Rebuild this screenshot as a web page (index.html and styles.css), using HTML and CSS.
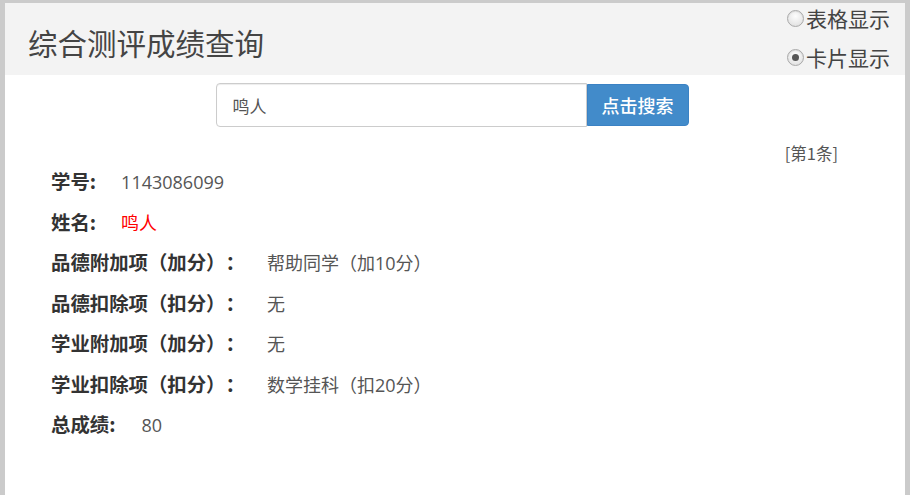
FILE: index.html
```html
<!DOCTYPE html>
<html lang="zh-CN">
<head>
<meta charset="utf-8">
<title>综合测评成绩查询</title>
<link rel="stylesheet" href="styles.css">
</head>
<body>
<div class="frame">
  <header class="header">
    <h1 class="title">综合测评成绩查询</h1>
    <div class="views">
      <label class="view"><input type="radio" name="view" class="radio">表格显示</label>
      <label class="view"><input type="radio" name="view" class="radio" checked>卡片显示</label>
    </div>
  </header>
  <div class="search">
    <input class="search-input" type="text" value="鸣人">
    <button class="search-btn" type="button">点击搜索</button>
  </div>
  <div class="counter">[第1条]</div>
  <div class="card">
    <div class="row"><span class="label">学号:</span><span class="value v-short">1143086099</span></div>
    <div class="row"><span class="label">姓名:</span><span class="value v-short name">鸣人</span></div>
    <div class="row"><span class="label">品德附加项（加分）：</span><span class="value v-long">帮助同学（加10分）</span></div>
    <div class="row"><span class="label">品德扣除项（扣分）：</span><span class="value v-long">无</span></div>
    <div class="row"><span class="label">学业附加项（加分）：</span><span class="value v-long">无</span></div>
    <div class="row"><span class="label">学业扣除项（扣分）：</span><span class="value v-long">数学挂科（扣20分）</span></div>
    <div class="row"><span class="label">总成绩:</span><span class="value v-total">80</span></div>
  </div>
</div>
</body>
</html>
```
FILE: styles.css
```css
* { box-sizing: border-box; }
html, body { margin: 0; padding: 0; background: #fff; }
body {
  font-family: "Open Sans", "Noto Sans CJK SC", sans-serif;
  color: #555;
  text-spacing-trim: space-all;
}
.frame {
  width: 910px;
  height: 495px;
  border-top: 3px solid #cbcbcb;
  border-left: 5px solid #cbcbcb;
  border-right: 5px solid #cbcbcb;
  background: #fff;
  overflow: hidden;
}
.header {
  height: 72px;
  background: #f3f3f3;
  display: flex;
  justify-content: space-between;
}
.title {
  margin: 0;
  padding: 22px 0 0 23px;
  font-family: "Noto Sans CJK SC", sans-serif;
  font-weight: normal;
  font-size: 29.5px;
  line-height: 34px;
  color: #444;
}
.views {
  display: flex;
  flex-direction: column;
  gap: 9px;
  padding: 0 15px 0 0;
}
.view {
  display: flex;
  align-items: center;
  height: 30px;
  font-family: "Noto Sans CJK SC", sans-serif;
  font-size: 21px;
  color: #444;
}
.radio {
  appearance: none;
  -webkit-appearance: none;
  width: 17px;
  height: 17px;
  margin: 0 2px 0 0;
  border: 1px solid #a9a9a9;
  border-radius: 50%;
  background: radial-gradient(circle at 50% 35%, #fdfdfd 0%, #e6e6e6 70%, #d5d5d5 100%);
  box-shadow: inset 0 1px 1px rgba(0,0,0,0.08);
  position: relative;
}
.radio:checked::after {
  content: "";
  position: absolute;
  left: 4px;
  top: 4px;
  width: 7px;
  height: 7px;
  border-radius: 50%;
  background: #555;
}
.search {
  display: flex;
  justify-content: center;
  align-items: center;
  margin-top: 8px;
  padding-right: 6px;
}
.search-input {
  width: 371px;
  height: 44px;
  margin: 0;
  padding: 0 16px;
  border: 1px solid #cccccc;
  border-radius: 4px 0 0 4px;
  box-shadow: inset 0 1px 1px rgba(0,0,0,0.075);
  font-family: "Noto Sans CJK SC", sans-serif;
  font-size: 17px;
  color: #555;
  outline: none;
}
.search-btn {
  width: 102px;
  height: 42px;
  margin: 0;
  padding: 0;
  border: 1px solid #3b82c4;
  border-radius: 0 4px 4px 0;
  background: #428bca;
  color: #fff;
  font-family: "Noto Sans CJK SC", sans-serif;
  font-size: 18px;
  font-weight: 500;
}
.counter {
  margin-top: 18px;
  padding-right: 67px;
  text-align: right;
  font-family: "Noto Sans CJK SC", sans-serif;
  font-size: 16.5px;
  line-height: 16px;
  color: #555;
}
.card {
  padding-left: 46px;
}
.row {
  display: flex;
  align-items: baseline;
  height: 40.5px;
  line-height: 40.5px;
}
.label {
  font-family: "Noto Sans CJK SC", sans-serif;
  font-weight: bold;
  font-size: 19.4px;
  color: #333;
}
.value {
  font-size: 18px;
  color: #555;
}
.v-short { margin-left: 25px; }
.v-total { margin-left: 26px; }
.v-long { margin-left: 22px; }
.name { color: #ff0000; }
```
